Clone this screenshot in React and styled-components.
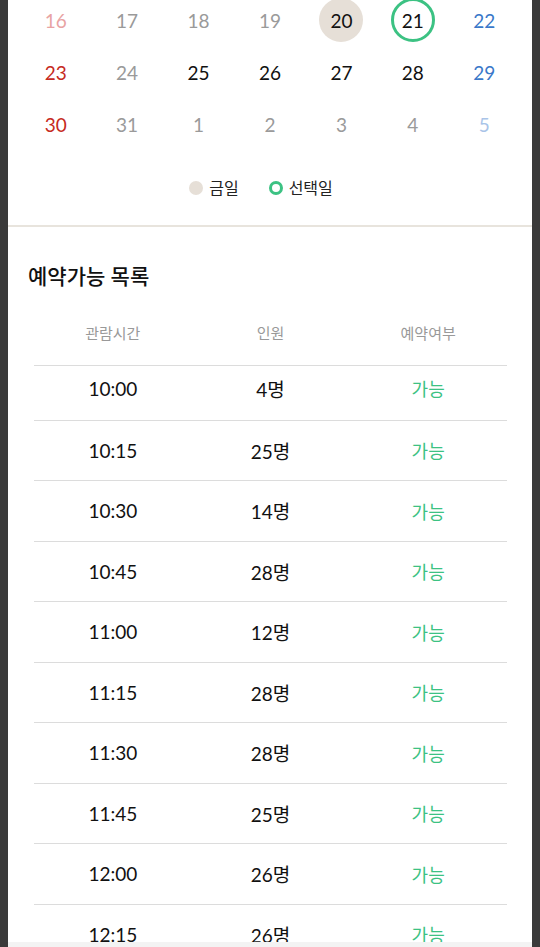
import React from "react";
import styled, {createGlobalStyle} from "styled-components";

const GlobalStyle = createGlobalStyle`
    html, body {
        margin: 0;
        padding: 0;
        height: 100%;
        overflow: hidden;
        background: #3a3a3a;
    }
    body {
        font-family: Lato, "Noto Sans CJK KR", sans-serif;
    }
`

const weeks = [
    [
        {d: 16, c: "#e8a3a3"}, {d: 17, c: "#9a9a9a"}, {d: 18, c: "#9a9a9a"}, {d: 19, c: "#9a9a9a"},
        {d: 20, c: "#111", today: true}, {d: 21, c: "#111", selected: true}, {d: 22, c: "#3a78c9"},
    ],
    [
        {d: 23, c: "#c62a22"}, {d: 24, c: "#9a9a9a"}, {d: 25, c: "#111"}, {d: 26, c: "#111"},
        {d: 27, c: "#111"}, {d: 28, c: "#111"}, {d: 29, c: "#3a78c9"},
    ],
    [
        {d: 30, c: "#c62a22"}, {d: 31, c: "#9a9a9a"}, {d: 1, c: "#9a9a9a"}, {d: 2, c: "#9a9a9a"},
        {d: 3, c: "#9a9a9a"}, {d: 4, c: "#9a9a9a"}, {d: 5, c: "#a9c4e8"},
    ],
];

const slots = [
    ["10:00", 4], ["10:15", 25], ["10:30", 14], ["10:45", 28], ["11:00", 12],
    ["11:15", 28], ["11:30", 28], ["11:45", 25], ["12:00", 26], ["12:15", 26],
];

export default function App() {
    return (
        <>
            <GlobalStyle/>
            <Panel>
                <Calendar>
                    {weeks.flat().map((day, i) => (
                        <DayCell key={i}>
                            <DayMark $color={day.c} $today={day.today} $selected={day.selected}>
                                {day.d}
                            </DayMark>
                        </DayCell>
                    ))}
                </Calendar>
                <Legend>
                    <LegendItem>
                        <LegendDot/>
                        금일
                    </LegendItem>
                    <LegendItem>
                        <LegendDot $ring/>
                        선택일
                    </LegendItem>
                </Legend>
                <Divider/>
                <ListSection>
                    <Title>예약가능 목록</Title>
                    <Table>
                        <HeadRow>
                            <HeadCell>관람시간</HeadCell>
                            <HeadCell>인원</HeadCell>
                            <HeadCell>예약여부</HeadCell>
                        </HeadRow>
                        {slots.map(([time, count], i) => (
                            <Row key={time} $first={i === 0}>
                                <Cell>{time}</Cell>
                                <Cell>{count}명</Cell>
                                <Cell $status>가능</Cell>
                            </Row>
                        ))}
                    </Table>
                </ListSection>
            </Panel>
            <BottomEdge/>
        </>
    );
}

const Panel = styled.div`
    width: 524px;
    margin-left: 8px;
    min-height: 100vh;
    background: #fff;
    overflow: hidden;
`

const Calendar = styled.div`
    display: grid;
    grid-template-columns: repeat(7, 1fr);
    grid-auto-rows: 52px;
    margin: -6px 12px 0 12px;
`

const DayCell = styled.div`
    display: flex;
    align-items: center;
    justify-content: center;
`

const DayMark = styled.div`
    width: 44px;
    height: 44px;
    box-sizing: border-box;
    border-radius: 50%;
    display: flex;
    align-items: center;
    justify-content: center;
    font-size: 19px;
    color: ${props => props.$color};
    background: ${props => props.$today ? "#e6dfd7" : "transparent"};
    border: ${props => props.$selected ? "3px solid #3cc283" : "none"};
`

const Legend = styled.div`
    display: flex;
    justify-content: center;
    gap: 30px;
    padding: 26px 18px 25px 0;
`

const LegendItem = styled.div`
    display: flex;
    align-items: center;
    gap: 6px;
    font-size: 16px;
    line-height: 24px;
    color: #222;
`

const LegendDot = styled.span`
    width: 14px;
    height: 14px;
    box-sizing: border-box;
    border-radius: 50%;
    background: ${props => props.$ring ? "transparent" : "#e6dfd7"};
    border: ${props => props.$ring ? "3px solid #3cc283" : "none"};
`

const Divider = styled.div`
    height: 2px;
    background: #e8e4dd;
`

const ListSection = styled.div`
    padding: 34px 25px 0 20px;
`

const Title = styled.h2`
    margin: 0;
    font-size: 21px;
    line-height: 30px;
    font-weight: 500;
    color: #111;
`

const Table = styled.div`
    margin: 18px 0 0 6px;
`

const HeadRow = styled.div`
    display: grid;
    grid-template-columns: repeat(3, 1fr);
    height: 57px;
    padding-bottom: 10px;
    box-sizing: border-box;
    align-items: center;
    border-bottom: 1px solid #dcdcdc;
`

const HeadCell = styled.div`
    text-align: center;
    font-size: 15px;
    color: #999;
`

const Row = styled.div`
    display: grid;
    grid-template-columns: repeat(3, 1fr);
    height: ${props => props.$first ? "54.5px" : "60.5px"};
    padding-bottom: ${props => props.$first ? "9px" : "0"};
    box-sizing: border-box;
    align-items: center;
    border-bottom: 1px solid #dcdcdc;
`

const Cell = styled.div`
    text-align: center;
    font-size: ${props => props.$status ? "18px" : "19px"};
    color: ${props => props.$status ? "#3cc283" : "#111"};
`

const BottomEdge = styled.div`
    position: fixed;
    left: 8px;
    right: 8px;
    bottom: 0;
    height: 5px;
    background: #f3f3f3;
`
